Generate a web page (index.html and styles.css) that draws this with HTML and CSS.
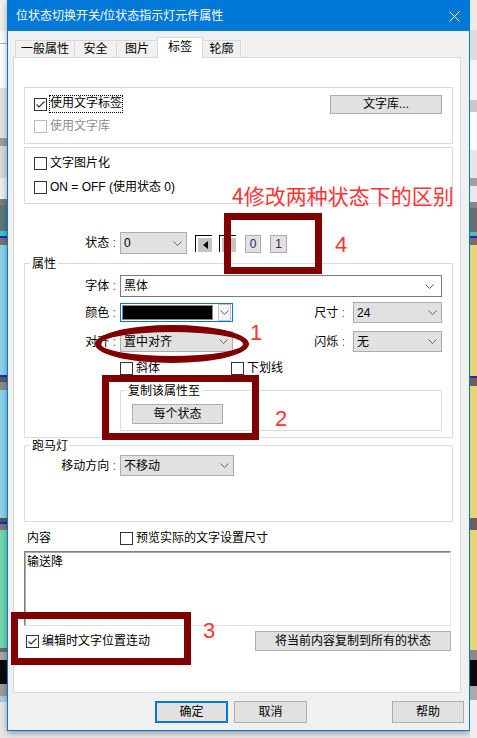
FILE: index.html
```html
<!DOCTYPE html>
<html lang="zh-CN">

<head>
    <meta charset="UTF-8">
    <meta name="viewport" content="width=device-width, initial-scale=1.0">
    <title>位状态切换开关/位状态指示灯元件属性</title>
    <link rel="stylesheet" href="styles.css">
</head>

<body>
    <div class="screen">
        <div class="strip strip-left"></div>

        <div class="dialog">
            <div class="titlebar">
                <span class="title">位状态切换开关/位状态指示灯元件属性</span>
                <svg class="close" width="11" height="11" viewBox="0 0 11 11">
                    <path d="M0.5 0.5L10.5 10.5M10.5 0.5L0.5 10.5" stroke="#fff" stroke-width="1" fill="none" />
                </svg>
            </div>

            <div class="dialog-body">
                <div class="tabs">
                    <div class="tab tab-general">一般属性</div>
                    <div class="tab tab-security">安全</div>
                    <div class="tab tab-picture">图片</div>
                    <div class="tab tab-label active">标签</div>
                    <div class="tab tab-outline">轮廓</div>
                </div>

                <div class="panel">
                    <!-- use label / library -->
                    <div class="group group-use">
                        <div class="row">
                            <span class="cb">
                                <svg width="11" height="11" viewBox="0 0 11 11">
                                    <path d="M1.5 5.5L4 8L9.5 2.5" stroke="#333" stroke-width="1.2" fill="none" />
                                </svg>
                            </span>
                            <span class="cb-text focus">使用文字标签</span>
                            <div class="btn btn-lib">文字库...</div>
                        </div>
                        <div class="row">
                            <span class="cb disabled"></span>
                            <span class="cb-text muted">使用文字库</span>
                        </div>
                    </div>

                    <div class="group group-pic">
                        <div class="row row-tall">
                            <span class="cb"></span>
                            <span class="cb-text">文字图片化</span>
                        </div>
                        <div class="row row-tall">
                            <span class="cb"></span>
                            <span class="cb-text">ON = OFF (使用状态 0)</span>
                        </div>
                    </div>

                    <!-- state selector -->
                    <div class="row state-row">
                        <span class="label label-state">状态 <span class="colon">:</span></span>
                        <div class="select select-state">
                            <span class="val">0</span>
                            <svg class="chev" width="9" height="5" viewBox="0 0 9 5"><polyline points="0.5,0.5 4.5,4.5 8.5,0.5" /></svg>
                        </div>
                        <div class="nav-btn nav-prev">
                            <svg width="5" height="8" viewBox="0 0 5 8"><polygon points="5,0 0,4 5,8" fill="#000" /></svg>
                        </div>
                        <div class="nav-btn nav-next"></div>
                        <div class="btn state-btn state-0">0</div>
                        <div class="btn state-btn state-1">1</div>
                    </div>

                    <!-- properties -->
                    <div class="group group-props">
                        <span class="legend">属性</span>

                        <div class="row">
                            <span class="label">字体 <span class="colon">:</span></span>
                            <div class="combo combo-font">
                                <span class="val">黑体</span>
                                <svg class="chev" width="9" height="5" viewBox="0 0 9 5"><polyline points="0.5,0.5 4.5,4.5 8.5,0.5" /></svg>
                            </div>
                        </div>

                        <div class="row row-color">
                            <span class="label">颜色 <span class="colon">:</span></span>
                            <div class="color-pick">
                                <span class="swatch"></span>
                                <span class="color-drop">
                                    <svg class="chev" width="9" height="5" viewBox="0 0 9 5"><polyline points="0.5,0.5 4.5,4.5 8.5,0.5" /></svg>
                                </span>
                            </div>
                            <span class="label-r">尺寸 <span class="colon">:</span></span>
                            <div class="select select-r">
                                <span class="val">24</span>
                                <svg class="chev" width="9" height="5" viewBox="0 0 9 5"><polyline points="0.5,0.5 4.5,4.5 8.5,0.5" /></svg>
                            </div>
                        </div>

                        <div class="row row-align">
                            <span class="label">对齐 <span class="colon">:</span></span>
                            <div class="select select-align">
                                <span class="val">置中对齐</span>
                                <svg class="chev" width="9" height="5" viewBox="0 0 9 5"><polyline points="0.5,0.5 4.5,4.5 8.5,0.5" /></svg>
                            </div>
                            <span class="label-r">闪烁 <span class="colon">:</span></span>
                            <div class="select select-r">
                                <span class="val">无</span>
                                <svg class="chev" width="9" height="5" viewBox="0 0 9 5"><polyline points="0.5,0.5 4.5,4.5 8.5,0.5" /></svg>
                            </div>
                        </div>

                        <div class="row row-styles">
                            <div class="style-item">
                                <span class="cb"></span>
                                <span class="cb-text">斜体</span>
                            </div>
                            <div class="style-item">
                                <span class="cb"></span>
                                <span class="cb-text">下划线</span>
                            </div>
                        </div>

                        <div class="group group-copy">
                            <span class="legend">复制该属性至</span>
                            <div class="btn btn-each">每个状态</div>
                        </div>
                    </div>

                    <!-- marquee -->
                    <div class="group group-marquee">
                        <span class="legend">跑马灯</span>
                        <div class="row">
                            <span class="label">移动方向 <span class="colon">:</span></span>
                            <div class="select select-move">
                                <span class="val">不移动</span>
                                <svg class="chev" width="9" height="5" viewBox="0 0 9 5"><polyline points="0.5,0.5 4.5,4.5 8.5,0.5" /></svg>
                            </div>
                        </div>
                    </div>

                    <!-- content -->
                    <div class="row content-row">
                        <span class="content-label">内容</span>
                        <span class="cb"></span>
                        <span class="cb-text">预览实际的文字设置尺寸</span>
                    </div>
                    <div class="textbox">输送降</div>

                    <div class="row bottom-row">
                        <span class="cb">
                            <svg width="11" height="11" viewBox="0 0 11 11">
                                <path d="M1.5 5.5L4 8L9.5 2.5" stroke="#333" stroke-width="1.2" fill="none" />
                            </svg>
                        </span>
                        <span class="cb-text">编辑时文字位置连动</span>
                        <div class="btn btn-copy-all">将当前内容复制到所有的状态</div>
                    </div>
                </div>

                <div class="dialog-buttons">
                    <div class="btn dbtn default">确定</div>
                    <div class="btn dbtn">取消</div>
                    <div class="btn dbtn help">帮助</div>
                </div>
            </div>
        </div>

        <div class="strip strip-right"></div>

        <!-- red annotations drawn over the screenshot -->
        <div class="note note-text">4修改两种状态下的区别</div>
        <div class="mark mark-state"></div>
        <div class="note-num num-4">4</div>
        <div class="mark-ellipse"></div>
        <div class="note-num num-1">1</div>
        <div class="mark mark-copy"></div>
        <div class="note-num num-2">2</div>
        <div class="mark mark-link"></div>
        <div class="note-num num-3">3</div>
    </div>
</body>

</html>
```

FILE: styles.css
```css
* {
    margin: 0;
    padding: 0;
    box-sizing: border-box;
}

body {
    width: 477px;
    height: 738px;
    overflow: hidden;
    font-family: "Liberation Sans", "Noto Sans CJK SC", sans-serif;
    font-size: 12px;
    line-height: 16px;
    color: #000;
}

.screen {
    position: relative;
    display: flex;
    width: 477px;
    height: 738px;
    background: #e6e6e6;
}

/* bits of the app window behind the dialog */
.strip {
    width: 7px;
    height: 738px;
    flex: none;
}

.strip-left {
    background: linear-gradient(to bottom,
            #efefef 0 31px, #fcfcfc 31px 43px, #b0b0b0 43px 44px, #ffffff 44px 88px,
            #e3e3e3 88px 138px, #9c9c9c 138px 146px, #d8d8d8 146px 178px, #eeeeef 178px 199px,
            #7d7d7d 199px 205px, #5c7878 205px 231px, #3cc6c3 231px 236px, #1d27c8 236px 238px,
            #737373 238px 245px, #8dd2ea 245px 375px, #2026c0 375px 377px, #5a5a5a 377px 382px,
            #8a8a8a 382px 390px, #8dd2ea 390px 518px, #585858 518px 522px, #2026c0 522px 524px,
            #7a7a7a 524px 530px, #70d6ae 530px 648px, #6a6a6a 648px 652px, #a5a5a5 652px 660px,
            #0a0a0a 660px 684px, #9a9a9a 684px 696px, #a9c8e0 696px 702px, #e6e6e6 702px);
}

.strip-right {
    background: linear-gradient(to bottom,
            #eaeaea 0 30px, #dcdcdc 30px 60px, #f4f4f4 60px 100px, #c8c8c8 100px 112px,
            #fbfbfb 112px 150px, #e6e6e6 150px 178px, #a0a0a0 178px 186px, #e9e9ea 186px 202px,
            #868686 202px 208px, #646e6e 208px 232px, #4bbeb8 232px 236px, #1d27c8 236px 238px,
            #7a6a6a 238px 245px, #e5d673 245px 376px, #1d27c8 376px 378px, #6b6060 378px 386px,
            #e5d673 386px 518px, #6b6060 518px 530px, #e5d673 530px 650px, #8a8a8a 650px 660px,
            #0a0a0a 660px 686px, #aaaaaa 686px 700px, #eeeeee 700px);
}

/* dialog window */
.dialog {
    width: 463px;
    height: 731px;
    flex: none;
    border: 1px solid #0078d7;
    background: #f0f0f0;
    box-shadow: 0 2px 6px rgba(0, 0, 0, 0.35);
}

.titlebar {
    display: flex;
    align-items: center;
    height: 30px;
    padding-left: 8px;
    background: #0078d7;
    color: #fff;
}

.close {
    margin-left: auto;
    margin-right: 9px;
}

.dialog-body {
    height: 699px;
}

/* tabs */
.tabs {
    position: relative;
    z-index: 1;
    display: flex;
    align-items: flex-end;
    height: 20px;
    margin: 6px 0 0 7px;
}

.tab {
    height: 17px;
    margin-left: -1px;
    border: 1px solid #d9d9d9;
    border-bottom: none;
    background: #f0f0f0;
    text-align: center;
    line-height: 16px;
}

.tab-general {
    width: 60px;
    margin-left: 0;
}

.tab-security {
    width: 43px;
}

.tab-picture {
    width: 42px;
}

.tab-label {
    width: 46px;
}

.tab-outline {
    width: 39px;
}

.tab.active {
    height: 21px;
    margin-bottom: -1px;
    background: #fff;
    line-height: 18px;
}

.panel {
    width: 448px;
    height: 636px;
    margin-left: 5px;
    padding: 0 7px 0 10px;
    border: 1px solid #d9d9d9;
    background: #fff;
}

/* group boxes */
.group {
    position: relative;
    border: 1px solid #dcdcdc;
}

.legend {
    position: absolute;
    top: -8px;
    left: 5px;
    padding: 0 2px;
    background: #fff;
    line-height: 16px;
}

.row {
    display: flex;
    align-items: center;
    height: 22px;
}

.row-tall {
    height: 24px;
}

.group-use {
    height: 57px;
    margin-top: 29px;
    padding: 5px 10px 0 9px;
}

.group-pic {
    height: 57px;
    margin-top: 3px;
    padding: 3px 9px 0;
}

/* checkboxes */
.cb {
    display: flex;
    align-items: center;
    justify-content: center;
    width: 13px;
    height: 13px;
    flex: none;
    border: 1px solid #333;
    background: #fff;
}

.cb.disabled {
    border-color: #bcbcbc;
}

.cb-text {
    margin-left: 3px;
    white-space: nowrap;
}

.cb-text.muted {
    color: #8d8d8d;
}

.cb-text.focus {
    height: 18px;
    margin-left: 2px;
    padding: 0 1px;
    line-height: 17px;
    outline: 1px dotted #000;
    outline-offset: -1px;
}

/* buttons */
.btn {
    display: flex;
    align-items: center;
    justify-content: center;
    border: 1px solid #adadad;
    background: #e1e1e1;
    white-space: nowrap;
}

.btn-lib {
    width: 112px;
    height: 19px;
    margin-left: auto;
}

/* labels + drop downs */
.label {
    width: 91px;
    flex: none;
    text-align: right;
    white-space: nowrap;
}

.label-state {
    width: 92px;
}

.colon {
    color: #7a3a7a;
}

.label-r {
    margin-left: auto;
    margin-right: 4px;
    white-space: nowrap;
}

.select,
.combo {
    display: flex;
    align-items: center;
    height: 21px;
    margin-left: 4px;
    padding: 0 4px 0 3px;
    border: 1px solid #adadad;
    background: #e1e1e1;
}

.combo {
    flex: 1;
    height: 22px;
    border-color: #7a7a7a;
    background: #fff;
    padding-right: 7px;
}

.val {
    flex: 1;
    white-space: nowrap;
}

.chev {
    flex: none;
}

.chev polyline {
    fill: none;
    stroke: #5f5f5f;
    stroke-width: 1;
}

.state-row {
    margin-top: 28px;
}

.select-state {
    width: 67px;
    height: 22px;
}

.nav-btn {
    display: flex;
    align-items: center;
    justify-content: center;
    width: 17px;
    height: 17px;
    padding: 2px 0 0 2px;
    border-top: 1px solid #000;
    border-left: 1px solid #000;
    background: #c4c4c4;
    background-clip: content-box;
}

.nav-prev {
    margin-left: 8px;
}

.nav-next {
    margin-left: 7px;
}

.state-btn {
    width: 16px;
    height: 18px;
    margin-top: 2px;
}

.state-0 {
    margin-left: 9px;
    color: #1b2a6b;
}

.state-1 {
    width: 17px;
    margin-left: 9px;
    color: #4a1652;
}

.group-props {
    height: 175px;
    margin-top: 9px;
    padding: 11px 10px 0 0;
}

.row-color {
    height: 21px;
    margin-top: 5px;
}

.color-pick {
    display: flex;
    align-items: center;
    width: 113px;
    height: 19px;
    margin-left: 4px;
    padding: 1px;
    border: 1px solid #0078d7;
    background: #fff;
}

.swatch {
    width: 91px;
    height: 15px;
    border: 1px solid #8a8a8a;
    background: #000;
}

.color-drop {
    display: flex;
    align-items: center;
    justify-content: center;
    width: 13px;
    height: 17px;
    margin-left: auto;
    border: 1px solid #c4c4c4;
    background: #f4f4f4;
}

.select-r {
    width: 89px;
}

.row-align {
    height: 21px;
    margin-top: 8px;
}

.select-align {
    width: 113px;
}

.row-styles {
    margin-top: 5px;
    padding-left: 95px;
}

.style-item {
    display: flex;
    align-items: center;
    width: 111px;
}

.group-copy {
    height: 41px;
    margin: 11px 0 0 95px;
    padding: 13px 0 0 11px;
}

.btn-each {
    width: 91px;
    height: 20px;
}

.group-marquee {
    height: 77px;
    margin-top: 7px;
    padding-top: 9px;
}

.group-marquee .row {
    height: 21px;
}

.select-move {
    width: 114px;
}

/* content */
.content-row {
    margin-top: 5px;
    padding-left: 3px;
}

.content-label {
    width: 93px;
}

.textbox {
    width: 427px;
    height: 75px;
    margin-top: 2px;
    padding: 2px 2px;
    border: 1px solid;
    border-color: #828282 #e3e3e3 #e3e3e3 #828282;
    box-shadow: inset 1px 1px 0 #a8a8a8;
}

.bottom-row {
    width: 427px;
    margin-top: 4px;
    padding-left: 2px;
}

.btn-copy-all {
    width: 196px;
    height: 20px;
    margin-left: auto;
}

/* OK / Cancel / Help */
.dialog-buttons {
    display: flex;
    height: 22px;
    margin-top: 8px;
    padding-left: 147px;
}

.dbtn {
    width: 73px;
    height: 22px;
    margin-right: 6px;
}

.dbtn.default {
    border: 2px solid #0078d7;
}

.dbtn.help {
    width: 72px;
    margin: 0 0 0 79px;
}

/* red markup on top of the screenshot */
.note {
    position: absolute;
    top: 185px;
    left: 232px;
    font-family: "Noto Sans CJK SC", sans-serif;
    font-size: 21px;
    line-height: 21px;
    color: #ff3333;
    white-space: nowrap;
}

.note-num {
    position: absolute;
    font-family: "Liberation Sans", sans-serif;
    font-size: 22px;
    line-height: 22px;
    color: #ff3333;
}

.num-4 {
    top: 234px;
    left: 335px;
}

.num-1 {
    top: 322px;
    left: 250px;
}

.num-2 {
    top: 408px;
    left: 275px;
}

.num-3 {
    top: 620px;
    left: 203px;
}

.mark {
    position: absolute;
    border: 7px solid #800000;
}

.mark-state {
    top: 213px;
    left: 224px;
    width: 98px;
    height: 61px;
}

.mark-copy {
    top: 375px;
    left: 102px;
    width: 157px;
    height: 65px;
}

.mark-link {
    top: 612px;
    left: 11px;
    width: 180px;
    height: 53px;
}

.mark-ellipse {
    position: absolute;
    top: 325px;
    left: 95px;
    width: 154px;
    height: 38px;
    border: solid #800000;
    border-width: 7px 6px;
    border-radius: 50%;
}
```
